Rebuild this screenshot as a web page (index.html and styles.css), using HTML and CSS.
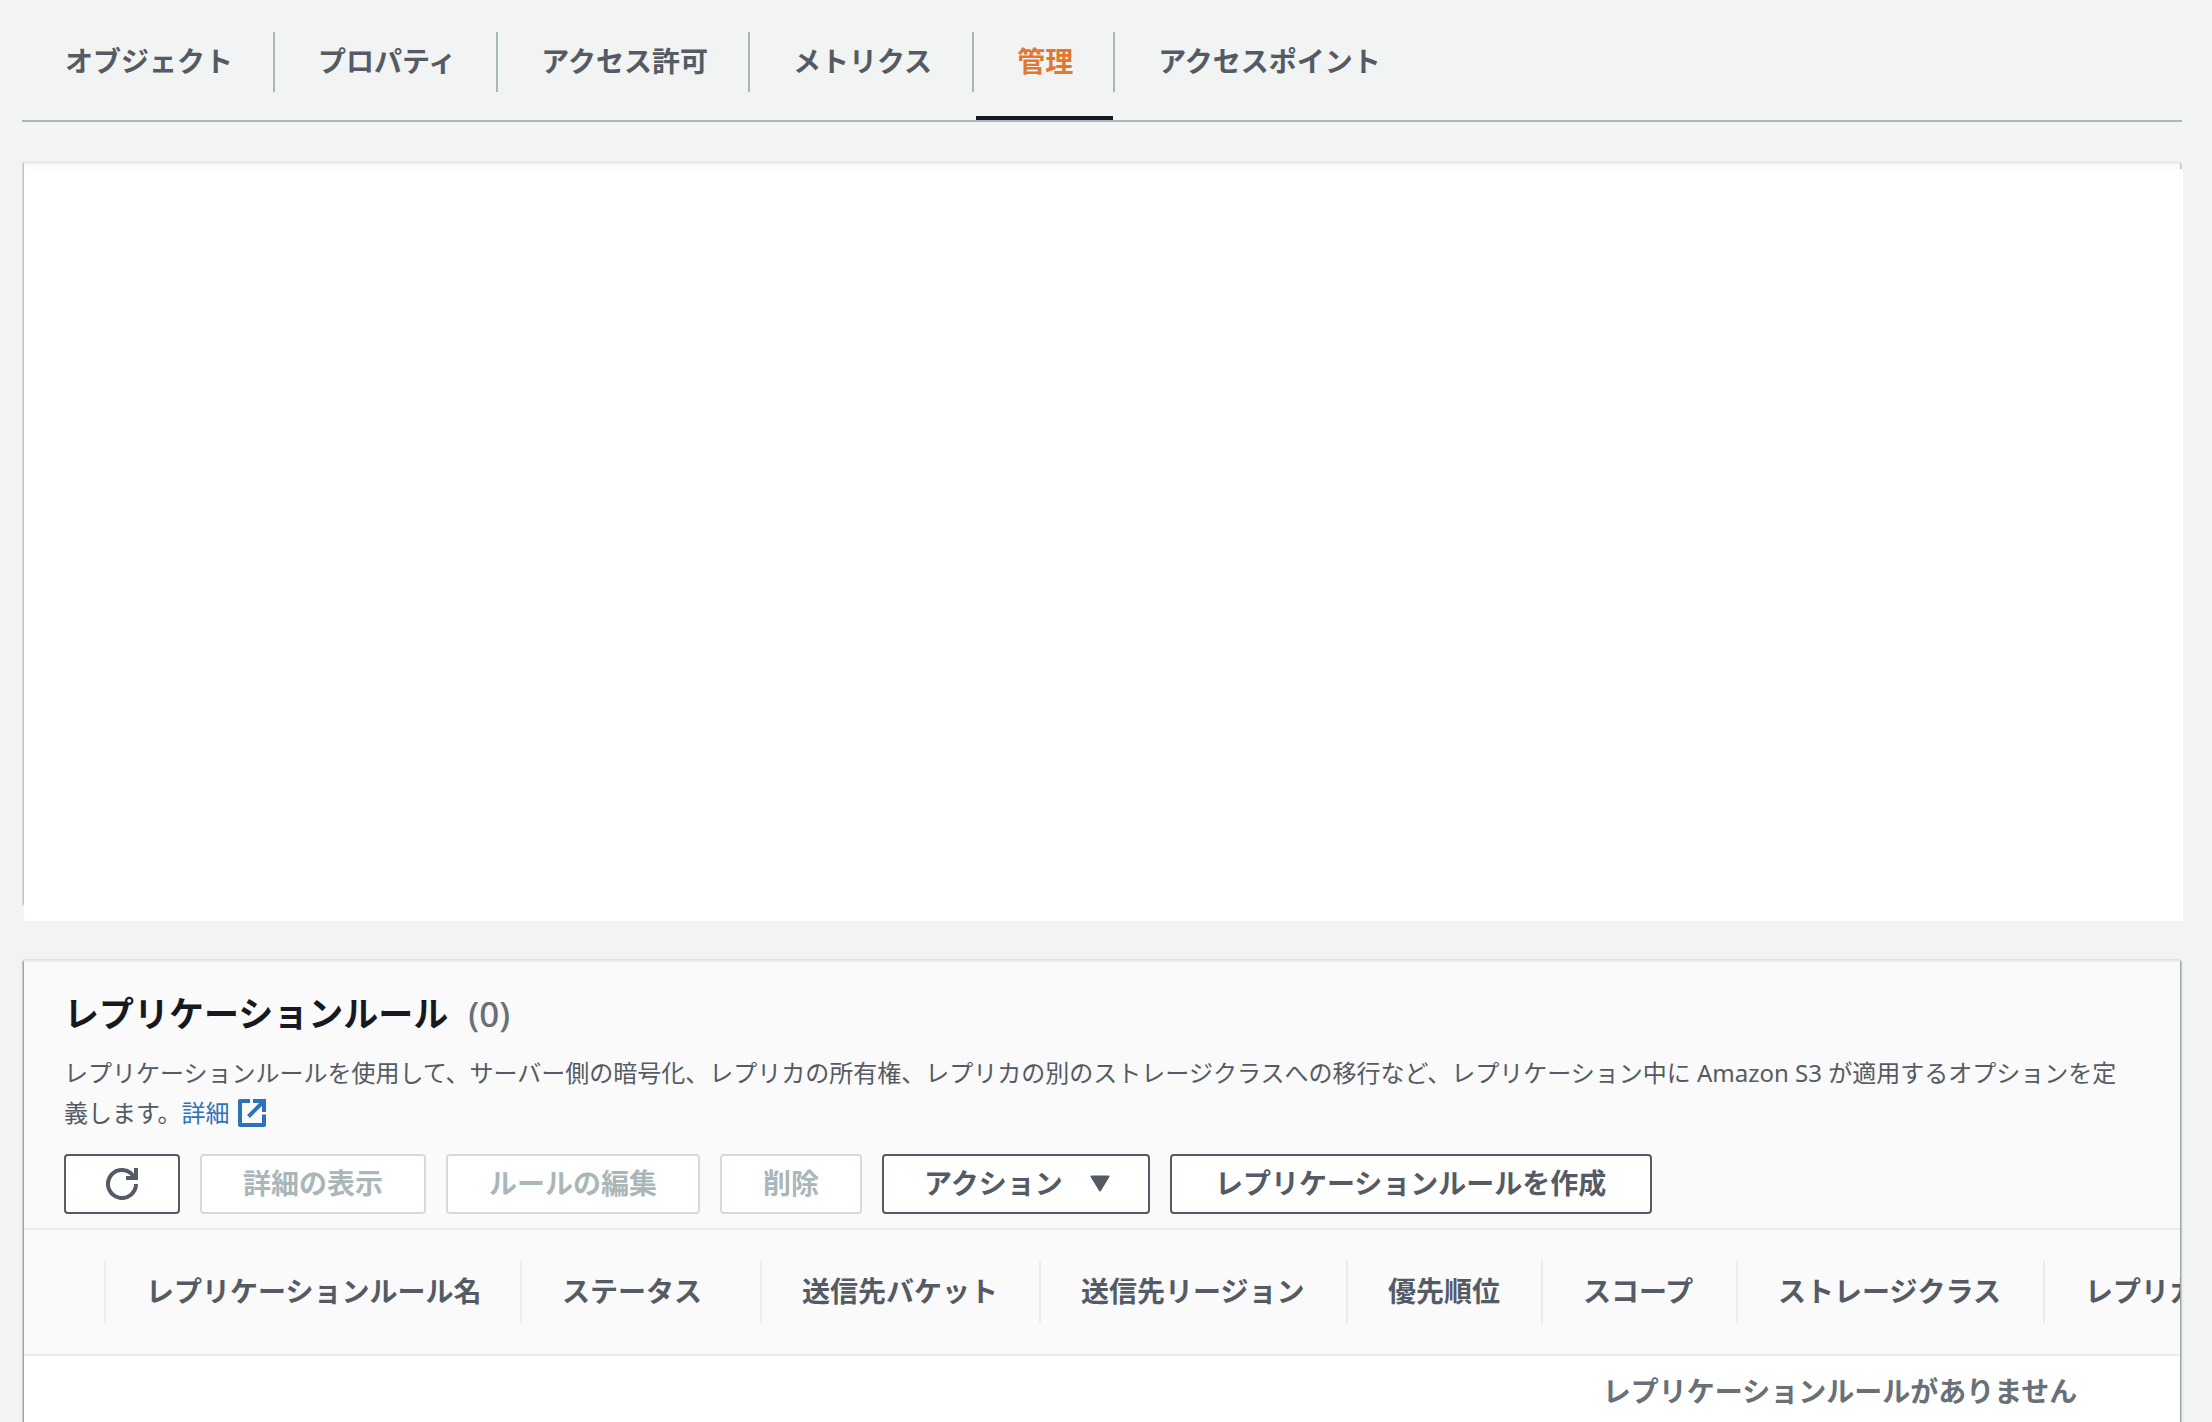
FILE: index.html
```html
<!DOCTYPE html>
<html lang="ja">
<head>
<meta charset="utf-8">
<meta name="viewport" content="width=device-width, initial-scale=1">
<title>レプリケーションルール</title>
<link rel="stylesheet" href="styles.css">
</head>
<body>
<nav class="tabs">
  <ul class="tab-list">
    <li class="tab"><a class="tab-link" href="#objects">オブジェクト</a></li>
    <li class="tab"><a class="tab-link" href="#properties">プロパティ</a></li>
    <li class="tab"><a class="tab-link" href="#permissions">アクセス許可</a></li>
    <li class="tab"><a class="tab-link" href="#metrics">メトリクス</a></li>
    <li class="tab tab-active"><a class="tab-link" href="#management" aria-current="page">管理</a></li>
    <li class="tab"><a class="tab-link" href="#access-points">アクセスポイント</a></li>
  </ul>
</nav>
<main class="content">
  <section class="card card-blank">
    <div class="blank"></div>
  </section>
  <section class="card card-rules">
    <header class="card-header">
      <h2 class="title">レプリケーションルール<span class="count">(0)</span></h2>
      <p class="description">レプリケーションルールを使用して、サーバー側の暗号化、レプリカの所有権、レプリカの別のストレージクラスへの移行など、レプリケーション中に Amazon S3 が適用するオプションを定義します。<a class="link" href="#learn-more">詳細<svg class="icon-external" viewBox="0 0 28 28" aria-hidden="true"><path d="M12 2H2v24h24V15.500" fill="none" stroke="currentColor" stroke-width="4" stroke-linejoin="round"/><path d="M15 2h11v11M25 3L10.500 17.500" fill="none" stroke="currentColor" stroke-width="4"/></svg></a></p>
      <div class="actions">
        <button class="button button-icon" type="button" aria-label="更新">
          <svg class="icon-refresh" viewBox="0 0 32 32" aria-hidden="true"><path d="M30 16a14 14 0 1 1-5-10.700L29 10M30 0v10H20" fill="none" stroke="currentColor" stroke-width="4"/></svg>
        </button>
        <button class="button" type="button" disabled>詳細の表示</button>
        <button class="button" type="button" disabled>ルールの編集</button>
        <button class="button" type="button" disabled>削除</button>
        <button class="button button-menu" type="button">アクション
          <svg class="icon-caret" viewBox="0 0 20 17" aria-hidden="true"><path d="M1.500 1.500h17L10 15.500z" fill="currentColor" stroke="currentColor" stroke-width="2" stroke-linejoin="round"/></svg>
        </button>
        <button class="button button-create" type="button">レプリケーションルールを作成</button>
      </div>
    </header>
    <div class="table-scroll">
      <table class="table">
        <colgroup>
          <col class="col-select"><col class="col-name"><col class="col-status"><col class="col-bucket"><col class="col-wide"><col class="col-short"><col class="col-short"><col class="col-wide"><col>
        </colgroup>
        <thead>
          <tr>
            <td class="head"></td>
            <th class="head" scope="col"><div class="head-label">レプリケーションルール名</div></th>
            <th class="head" scope="col"><div class="head-label">ステータス</div></th>
            <th class="head" scope="col"><div class="head-label">送信先バケット</div></th>
            <th class="head" scope="col"><div class="head-label">送信先リージョン</div></th>
            <th class="head" scope="col"><div class="head-label">優先順位</div></th>
            <th class="head" scope="col"><div class="head-label">スコープ</div></th>
            <th class="head" scope="col"><div class="head-label">ストレージクラス</div></th>
            <th class="head" scope="col"><div class="head-label">レプリカ</div></th>
          </tr>
        </thead>
        <tbody>
          <tr><td class="empty" colspan="9">レプリケーションルールがありません</td></tr>
        </tbody>
      </table>
    </div>
  </section>
</main>
</body>
</html>
```
FILE: styles.css
```css
* {
  box-sizing: border-box;
}

body {
  margin: 0;
  min-height: 100vh;
  display: flex;
  flex-direction: column;
  overflow: hidden;
  background: #f2f3f3;
  color: #545b64;
  font-family: "Noto Sans", "Noto Sans CJK JP", sans-serif;
  font-size: 28px;
  line-height: 40px;
}

.tabs {
  margin: 0 30px 0 22px;
  padding-top: 32px;
  border-bottom: 2px solid #aab7b8;
}

.tab-list {
  display: flex;
  margin: 0;
  padding: 0;
  list-style: none;
}

.tab {
  position: relative;
  padding-bottom: 28px;
}

.tab-link {
  display: block;
  padding: 0 40px 2px 43px;
  border-right: 2px solid #aab7b8;
  color: inherit;
  font-weight: 700;
  line-height: 58px;
  text-decoration: none;
}

.tab:last-child .tab-link {
  border-right: 0;
}

.tab-active .tab-link {
  color: #e07830;
}

.tab-active::after {
  content: "";
  position: absolute;
  right: 2px;
  bottom: 0;
  left: 2px;
  height: 4px;
  background: #16191f;
}

.content {
  flex: 1;
  display: flex;
  flex-direction: column;
  gap: 56px;
  padding: 40px 32px 0 24px;
}

.card {
  border-top: 2px solid #eaeded;
  background: #fafafa;
  box-shadow: 1px 1px 2px rgba(0, 28, 36, .5), -1px 1px 2px rgba(0, 28, 36, .5);
}

.card-blank {
  height: 742px;
  padding-top: 5px;
  box-shadow: 1px 1px 2px rgba(0, 28, 36, .3), -1px 1px 2px rgba(0, 28, 36, .3);
}

.blank {
  height: 752px;
  margin-right: -3px;
  background: #fff;
}

.card-rules {
  flex: 1;
  background: #fff;
}

.card-header {
  padding: 28px 40px 14px;
  background: #fafafa;
}

.title {
  margin: 0;
  color: #16191f;
  font-size: 35px;
  line-height: 48px;
}

.count {
  margin-left: 20px;
  color: #687078;
  font-weight: 500;
}

.description {
  margin: 15px 0 21px;
  font-size: 24px;
}

.link {
  color: #2e73b8;
  text-decoration: none;
}

.icon-external {
  width: 28px;
  height: 28px;
  margin-left: 8px;
  vertical-align: -5px;
}

.actions {
  display: flex;
  gap: 20px;
}

.button {
  display: flex;
  align-items: center;
  justify-content: center;
  height: 60px;
  padding: 0 41px 2px;
  border: 2px solid #545b64;
  border-radius: 4px;
  background: #fff;
  color: #545b64;
  font: inherit;
  font-weight: 700;
  white-space: nowrap;
}

.button:disabled {
  border-color: #d5dbdb;
  color: #aab7b8;
}

.button-icon {
  padding: 0 40px;
}

.button-menu {
  gap: 27px;
  padding: 0 38px 2px 40px;
}

.button-create {
  min-width: 482px;
}

.icon-refresh {
  width: 32px;
  height: 32px;
}

.icon-caret {
  width: 20px;
  height: 17px;
}

.table-scroll {
  overflow: hidden;
}

.table {
  width: 3632px;
  table-layout: fixed;
  border-collapse: collapse;
}

.head {
  padding: 31px 0;
  border-top: 2px solid #eaeded;
  border-bottom: 2px solid #eaeded;
  background: #fafafa;
}

.head-label {
  padding: 0 38px 2px 40px;
  border-left: 2px solid #eaeded;
  line-height: 60px;
  text-align: left;
  white-space: nowrap;
}

.col-select {
  width: 80px;
}

.col-name {
  width: 416px;
}

.col-status {
  width: 240px;
}

.col-bucket {
  width: 279px;
}

.col-wide {
  width: 307px;
}

.col-short {
  width: 195px;
}

.empty {
  padding: 15px 0;
  color: #687078;
  font-weight: 700;
  text-align: center;
}
```
